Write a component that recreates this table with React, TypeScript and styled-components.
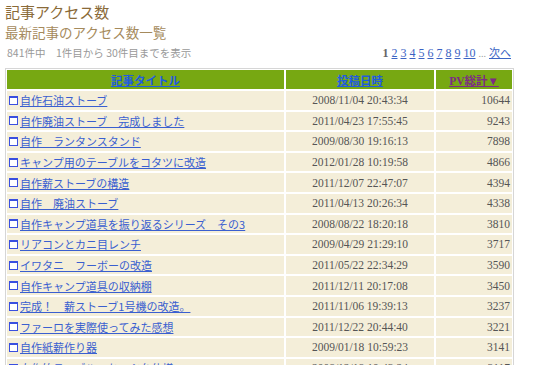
import React from "react";
import styled, { createGlobalStyle } from "styled-components";

const Global = createGlobalStyle`
  html, body { margin: 0; padding: 0; background: #ffffff; }
  body { font-family: "Noto Sans CJK JP", "DejaVu Sans", sans-serif; }
`;

const Page = styled.div`
  padding: 1px 0 0 5px;
  width: 509px;
`;

const Title = styled.h1`
  margin: 0;
  font-size: 15px;
  line-height: 21px;
  font-weight: normal;
  color: #8a6a38;
`;

const SubTitle = styled.h2`
  margin: 0;
  font-size: 13.5px;
  line-height: 21px;
  font-weight: normal;
  color: #a58a5c;
`;

const InfoBar = styled.div`
  display: flex;
  justify-content: space-between;
  align-items: baseline;
  margin-top: 1px;
  height: 20px;
`;

const Info = styled.span`
  font-size: 10.5px;
  color: #999999;
  padding-left: 2px;
`;

const Pager = styled.div`
  display: flex;
  align-items: baseline;
  gap: 3px;
  padding-right: 3px;
  font-family: "Liberation Serif", serif;
  font-size: 12px;
`;

const Current = styled.span`
  font-weight: bold;
  color: #666666;
`;

const PageLink = styled.a`
  color: #3b63c4;
  text-decoration: underline;
`;

const Dots = styled.span`
  color: #999999;
  font-size: 10px;
`;

const NextLink = styled.a`
  color: #3b63c4;
  text-decoration: underline;
  font-family: "Noto Sans CJK JP", sans-serif;
  font-size: 11px;
`;

const TableFrame = styled.div`
  border: 1px solid #d6d6d6;
  margin-top: 4px;
`;

const Table = styled.table`
  border-collapse: separate;
  border-spacing: 2px;
  margin: -1px;
  width: calc(100% + 2px);
  table-layout: fixed;
`;

const HeadCell = styled.th`
  background: #77a812;
  height: 19px;
  padding: 0;
  text-align: center;
  font-size: 11.5px;
  font-weight: bold;
`;

const HeadLink = styled.a<{ $visited?: boolean }>`
  color: ${(p) => (p.$visited ? "#7d2a86" : "#1f5ce0")};
  text-decoration: underline;
  font-family: ${(p) => (p.$visited ? '"Liberation Serif", "Noto Sans CJK JP", serif' : '"Noto Sans CJK JP", sans-serif')};
`;

const Cell = styled.td<{ $align?: "left" | "center" | "right" }>`
  background: #f4eed9;
  height: 18.6px;
  padding: 0 2px;
  text-align: ${(p) => p.$align ?? "left"};
  white-space: nowrap;
  overflow: hidden;
  font-family: "Liberation Serif", serif;
  font-size: 11.5px;
  color: #555555;
`;

const TitleLink = styled.a`
  color: #3a5fd0;
  text-decoration: underline;
  font-family: "Noto Sans CJK JP", sans-serif;
  font-size: 11px;
  display: inline-flex;
  align-items: center;
`;

const Icon = styled.svg`
  width: 9px;
  height: 9px;
  margin-right: 2px;
  flex: none;
`;

const DocIcon = () => (
  <Icon viewBox="0 0 9 9">
    <rect x="0.5" y="0.5" width="8" height="8" fill="#ffffff" stroke="#3a4fe0" />
    <rect x="0" y="0" width="9" height="2" fill="#3a4fe0" />
  </Icon>
);

const rows: [string, string, number][] = [
  ["自作石油ストーブ", "2008/11/04 20:43:34", 10644],
  ["自作廃油ストーブ　完成しました", "2011/04/23 17:55:45", 9243],
  ["自作　ランタンスタンド", "2009/08/30 19:16:13", 7898],
  ["キャンプ用のテーブルをコタツに改造", "2012/01/28 10:19:58", 4866],
  ["自作薪ストーブの構造", "2011/12/07 22:47:07", 4394],
  ["自作　廃油ストーブ", "2011/04/13 20:26:34", 4338],
  ["自作キャンプ道具を振り返るシリーズ　その3", "2008/08/22 18:20:18", 3810],
  ["リアコンとカニ目レンチ", "2009/04/29 21:29:10", 3717],
  ["イワタニ　フーボーの改造", "2011/05/22 22:34:29", 3590],
  ["自作キャンプ道具の収納棚", "2011/12/11 20:17:08", 3450],
  ["完成！　薪ストーブ1号機の改造。", "2011/11/06 19:39:13", 3237],
  ["ファーロを実際使ってみた感想", "2011/12/22 20:44:40", 3221],
  ["自作紙薪作り器", "2009/01/18 10:59:23", 3141],
  ["自作竹テーブル　ちゃぶ台仕様", "2008/12/18 19:43:24", 3117],
];

export default function App() {
  return (
    <>
      <Global />
      <Page>
        <Title>記事アクセス数</Title>
        <SubTitle>最新記事のアクセス数一覧</SubTitle>
        <InfoBar>
          <Info>841件中　1件目から 30件目までを表示</Info>
          <Pager>
            <Current>1</Current>
            {[2, 3, 4, 5, 6, 7, 8, 9, 10].map((n) => (
              <PageLink key={n} href="#">{n}</PageLink>
            ))}
            <Dots>...</Dots>
            <NextLink href="#">次へ</NextLink>
          </Pager>
        </InfoBar>
        <TableFrame>
          <Table>
            <colgroup>
              <col style={{ width: 277 }} />
              <col style={{ width: 148 }} />
              <col />
            </colgroup>
            <thead>
              <tr>
                <HeadCell><HeadLink href="#">記事タイトル</HeadLink></HeadCell>
                <HeadCell><HeadLink href="#">投稿日時</HeadLink></HeadCell>
                <HeadCell><HeadLink href="#" $visited>PV総計▼</HeadLink></HeadCell>
              </tr>
            </thead>
            <tbody>
              {rows.map(([t, d, n]) => (
                <tr key={t}>
                  <Cell>
                    <TitleLink href="#"><DocIcon />{t}</TitleLink>
                  </Cell>
                  <Cell $align="center">{d}</Cell>
                  <Cell $align="right">{n}</Cell>
                </tr>
              ))}
            </tbody>
          </Table>
        </TableFrame>
      </Page>
    </>
  );
}
